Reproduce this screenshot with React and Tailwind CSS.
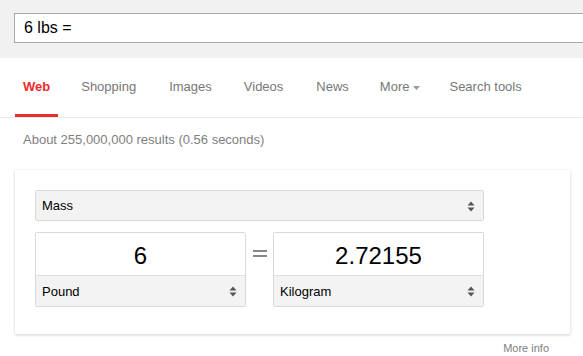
import React from "react";

function Arrows() {
  return (
    <svg width="8" height="11" viewBox="0 0 8 11" className="shrink-0">
      <path d="M4 0.5 L7.5 4.5 L0.5 4.5 Z" fill="#555" />
      <path d="M4 10.5 L7.5 6.5 L0.5 6.5 Z" fill="#555" />
    </svg>
  );
}

function Select({ label, className = "" }) {
  return (
    <div className={"flex items-center justify-between bg-[#f3f3f3] pl-[6px] pr-[8px] pt-[1px] text-[13px] text-black " + className}>
      <span>{label}</span>
      <Arrows />
    </div>
  );
}

function UnitBox({ value, unit }) {
  return (
    <div className="flex w-[211px] flex-col rounded-[2px] border border-[#d9d9d9]">
      <div className="flex h-[42px] items-center justify-center bg-white pt-[4px] text-[24px] text-black">
        {value}
      </div>
      <Select label={unit} className="h-[31px] border-t border-[#e0e0e0]" />
    </div>
  );
}

export default function App() {
  const tabs = [
    ["Shopping", ""],
    ["Images", "ml-[2px]"],
    ["Videos", "ml-[1px]"],
    ["News", "ml-[2px]"],
  ];
  return (
    <div className="h-[356px] w-[583px] overflow-hidden bg-white font-['Liberation_Sans',Arial,sans-serif]">
      <div className="h-[58px] overflow-hidden bg-[#f1f1f1] pl-[14px] pt-[13px]">
        <div className="flex h-[30px] w-[620px] items-center border border-[#a9a9a9] bg-white pl-[9px] text-[16px] text-black">
          6 lbs =
        </div>
      </div>
      <div className="flex h-[60px] items-stretch gap-[15px] border-b border-[#ebebeb] pl-[15px] text-[13px] text-[#777]">
        <div className="flex items-center border-b-[3px] border-[#ec2b2b] px-2 pt-[2px] font-bold text-[#ec2b2b]">
          Web
        </div>
        {tabs.map(([t, m]) => (
          <div key={t} className={"flex items-center border-b-[3px] border-transparent px-2 pt-[2px] " + m}>
            {t}
          </div>
        ))}
        <div className="flex items-center gap-[4px] border-b-[3px] border-transparent px-2 pt-[2px]">
          More
          <svg width="7" height="4" viewBox="0 0 7 4" className="mt-[1px]">
            <path d="M0 0 L7 0 L3.5 4 Z" fill="#999" />
          </svg>
        </div>
        <div className="-ml-[2px] flex items-center border-b-[3px] border-transparent px-2 pt-[2px]">
          Search tools
        </div>
      </div>
      <div className="pl-[23px] pt-[14px] text-[13px] leading-[16px] text-[#808080]">
        About 255,000,000 results (0.56 seconds)
      </div>
      <div className="ml-[15px] mt-[22px] w-[555px] bg-white px-[20px] pb-[27px] pt-[20px] shadow-[0_1px_3px_rgba(0,0,0,0.2)]">
        <Select label="Mass" className="h-[31px] w-[449px] rounded-[2px] border border-[#d9d9d9]" />
        <div className="mt-[11px] flex items-start">
          <UnitBox value="6" unit="Pound" />
          <div className="flex w-[27px] flex-col items-center gap-[3px] pt-[18px]">
            <div className="h-[2px] w-[14px] bg-[#888]" />
            <div className="h-[2px] w-[14px] bg-[#888]" />
          </div>
          <UnitBox value="2.72155" unit="Kilogram" />
        </div>
      </div>
      <div className="flex w-[549px] justify-end pt-[6px] text-[11px] text-[#808080]">
        More info
      </div>
    </div>
  );
}
